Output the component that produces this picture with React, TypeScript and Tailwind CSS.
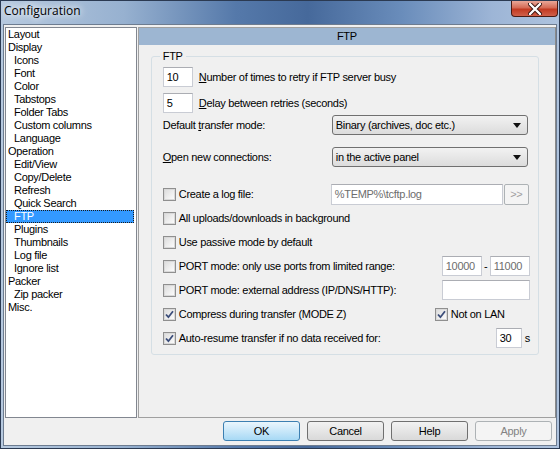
import React from "react";

const tree: [string, number][] = [
  ["Layout", 0],
  ["Display", 0],
  ["Icons", 1],
  ["Font", 1],
  ["Color", 1],
  ["Tabstops", 1],
  ["Folder Tabs", 1],
  ["Custom columns", 1],
  ["Language", 1],
  ["Operation", 0],
  ["Edit/View", 1],
  ["Copy/Delete", 1],
  ["Refresh", 1],
  ["Quick Search", 1],
  ["FTP", 1],
  ["Plugins", 1],
  ["Thumbnails", 1],
  ["Log file", 1],
  ["Ignore list", 1],
  ["Packer", 0],
  ["Zip packer", 1],
  ["Misc.", 0],
];

function Check({ checked }: { checked?: boolean }) {
  return (
    <span className="flex h-[13px] w-[13px] shrink-0 items-center justify-center border border-[#8f8f8f] bg-[#f4f4f4]">
      <span className="flex h-[11px] w-[11px] items-center justify-center border border-[#d9d9d9] bg-gradient-to-br from-[#dedede] to-[#fbfbfb]">
        {checked && (
          <svg width="9" height="9" viewBox="0 0 9 9">
            <path d="M1 4.5 L3.4 7.2 L8 1.2" fill="none" stroke="#3b4d7a" strokeWidth="1.8" />
          </svg>
        )}
      </span>
    </span>
  );
}

function Box({ value, w, disabled }: { value?: string; w: string; disabled?: boolean }) {
  return (
    <span
      className={`flex h-[20px] shrink-0 items-center border border-[#c9ccd4] border-t-[#abadb3] bg-white pl-[3px] ${w} ${
        disabled ? "text-[#6d6d6d]" : "text-black"
      }`}
    >
      {value}
    </span>
  );
}

function Combo({ text }: { text: string }) {
  return (
    <span className="ml-auto mr-[3px] flex h-[20px] w-[196px] items-center justify-between rounded-[3px] border border-[#707070] bg-gradient-to-b from-[#f2f2f2] to-[#dcdcdc] pl-[3px] pr-[6px]">
      <span>{text}</span>
      <svg width="8" height="5" viewBox="0 0 8 5">
        <path d="M0 0 H8 L4 5 Z" fill="#111" />
      </svg>
    </span>
  );
}

function CheckRow({ label, checked, w, children }: { label: string; checked?: boolean; w?: string; children?: React.ReactNode }) {
  return (
    <div className="flex h-[24px] items-center">
      <span className={`flex items-center gap-[3px] ${w ?? ""}`}>
        <Check checked={checked} />
        <span>{label}</span>
      </span>
      {children}
    </div>
  );
}

function Btn({ label, kind }: { label: string; kind?: "default" | "disabled" }) {
  const cls =
    kind === "default"
      ? "border-[#3c7fb1] bg-gradient-to-b from-[#eaf6fd] to-[#a7d9f5] text-black"
      : kind === "disabled"
        ? "border-[#adb2b5] bg-[#f4f4f4] text-[#838383]"
        : "border-[#707070] bg-gradient-to-b from-[#f2f2f2] to-[#d9d9d9] text-black";
  return (
    <span className={`flex h-[20px] w-[77px] items-center justify-center rounded-[3px] border ${cls}`}>{label}</span>
  );
}

export default function App() {
  return (
    <div className="h-[449px] w-[560px] overflow-hidden border border-[#2b3a52] bg-[linear-gradient(90deg,#b6c9df_0%,#97b1d0_22%,#5579aa_42%,#46699b_55%,#6a8dbb_72%,#9db5d6_88%,#aec3de_100%)] font-['Liberation_Sans',Arial,sans-serif] text-[11px] tracking-[-0.3px] text-black">
      <div className="flex h-[23px] items-start">
        <span className="pl-[3px] font-['Open_Sans',sans-serif] text-[12px] leading-[20px] tracking-normal [text-shadow:0_0_6px_#fff,0_0_10px_#fff]">
          Configuration
        </span>
        <span className="ml-auto mr-[1px] flex h-[16px] w-[47px] items-center justify-center rounded-b-[4px] border border-t-0 border-[#4a1a12] bg-[linear-gradient(180deg,#e9a798_0%,#d46a55_45%,#c23a22_55%,#d0604a_100%)]">
          <svg width="14" height="12" viewBox="0 0 14 12">
            <path d="M2 1 L12 11 M12 1 L2 11" stroke="#3a1410" strokeWidth="4.2" strokeLinecap="round" />
            <path d="M2 1 L12 11 M12 1 L2 11" stroke="#ffffff" strokeWidth="2.4" strokeLinecap="round" />
          </svg>
        </span>
      </div>

      <div className="mx-[2px] flex h-[422px] flex-col border border-[#6d7c90] bg-[#f0f0f0]">
        <div className="mt-[2px] flex">
          <div className="ml-[1px] h-[391px] w-[132px] border border-[#828790] bg-white">
            {tree.map(([name, lvl]) =>
              name === "FTP" ? (
                <div
                  key={name}
                  className="mr-[2px] h-[13px] border border-dotted border-[#1a1a1a] bg-[#3399ff] pl-[7px] leading-[11px] text-white"
                >
                  {name}
                </div>
              ) : (
                <div key={name} className={`h-[13px] border border-transparent leading-[11px] ${lvl ? "pl-[7px]" : "pl-[1px]"}`}>
                  {name}
                </div>
              )
            )}
          </div>

          <div className="ml-[1px] h-[391px] w-[419px] border border-[#a0a0a0] border-r-[#8a8a8a]">
            <div className="flex h-[17px] items-center justify-center bg-[#9db6d2]">FTP</div>

            <div className="relative ml-[12px] mt-[11px] w-[388px] rounded-[3px] border border-[#d5dfe5] pb-[4px] pl-[11px] pr-[7px]">
              <span className="absolute left-[8px] top-[-8px] bg-[#f0f0f0] px-[3px] leading-[14px]">FTP</span>

              <div className="mt-[10px] flex h-[20px] items-center gap-[6px]">
                <Box value="10" w="w-[30px]" />
                <span>
                  <span className="underline">N</span>umber of times to retry if FTP server busy
                </span>
              </div>
              <div className="mt-[6px] flex h-[20px] items-center gap-[6px]">
                <Box value="5" w="w-[30px]" />
                <span>
                  <span className="underline">D</span>elay between retries (seconds)
                </span>
              </div>
              <div className="mt-[2px] flex h-[20px] items-center">
                <span>
                  Default <span className="underline">t</span>ransfer mode:
                </span>
                <Combo text="Binary (archives, doc etc.)" />
              </div>
              <div className="mt-[12px] flex h-[20px] items-center">
                <span>
                  <span className="underline">O</span>pen new connections:
                </span>
                <Combo text="in the active panel" />
              </div>

              <div className="mt-[17px] flex h-[21px] items-center">
                <span className="flex w-[168px] items-center gap-[3px]">
                  <Check />
                  <span>Create a log file:</span>
                </span>
                <span className="flex h-[21px] w-[172px] items-center border border-[#c9ccd4] border-t-[#abadb3] bg-white pl-[3px] text-[#6d6d6d]">
                  %TEMP%\tcftp.log
                </span>
                <span className="ml-[1px] flex h-[21px] w-[25px] items-center justify-center rounded-[2px] border border-[#adb2b5] bg-[#f4f4f4] text-[#a0a0a0]">
                  &gt;&gt;
                </span>
              </div>

              <div className="mt-[1px]">
                <CheckRow label="All uploads/downloads in background" />
                <CheckRow label="Use passive mode by default" />
                <CheckRow label="PORT mode: only use ports from limited range:" w="w-[279px]">
                  <Box value="10000" w="w-[40px]" disabled />
                  <span className="w-[8px] text-center">-</span>
                  <Box value="11000" w="w-[40px]" disabled />
                </CheckRow>
                <CheckRow label="PORT mode: external address (IP/DNS/HTTP):" w="w-[279px]">
                  <Box w="w-[88px]" />
                </CheckRow>
                <CheckRow label="Compress during transfer (MODE Z)" checked w="w-[272px]">
                  <span className="flex items-center gap-[3px]">
                    <Check checked />
                    <span>Not on LAN</span>
                  </span>
                </CheckRow>
                <CheckRow label="Auto-resume transfer if no data received for:" checked w="w-[333px]">
                  <Box value="30" w="w-[26px]" />
                  <span className="ml-[3px]">s</span>
                </CheckRow>
              </div>
            </div>
          </div>
        </div>

        <div className="mt-[3px] flex justify-end gap-[7px] pr-[4px]">
          <Btn label="OK" kind="default" />
          <Btn label="Cancel" />
          <Btn label="Help" />
          <Btn label="Apply" kind="disabled" />
        </div>
      </div>
    </div>
  );
}
